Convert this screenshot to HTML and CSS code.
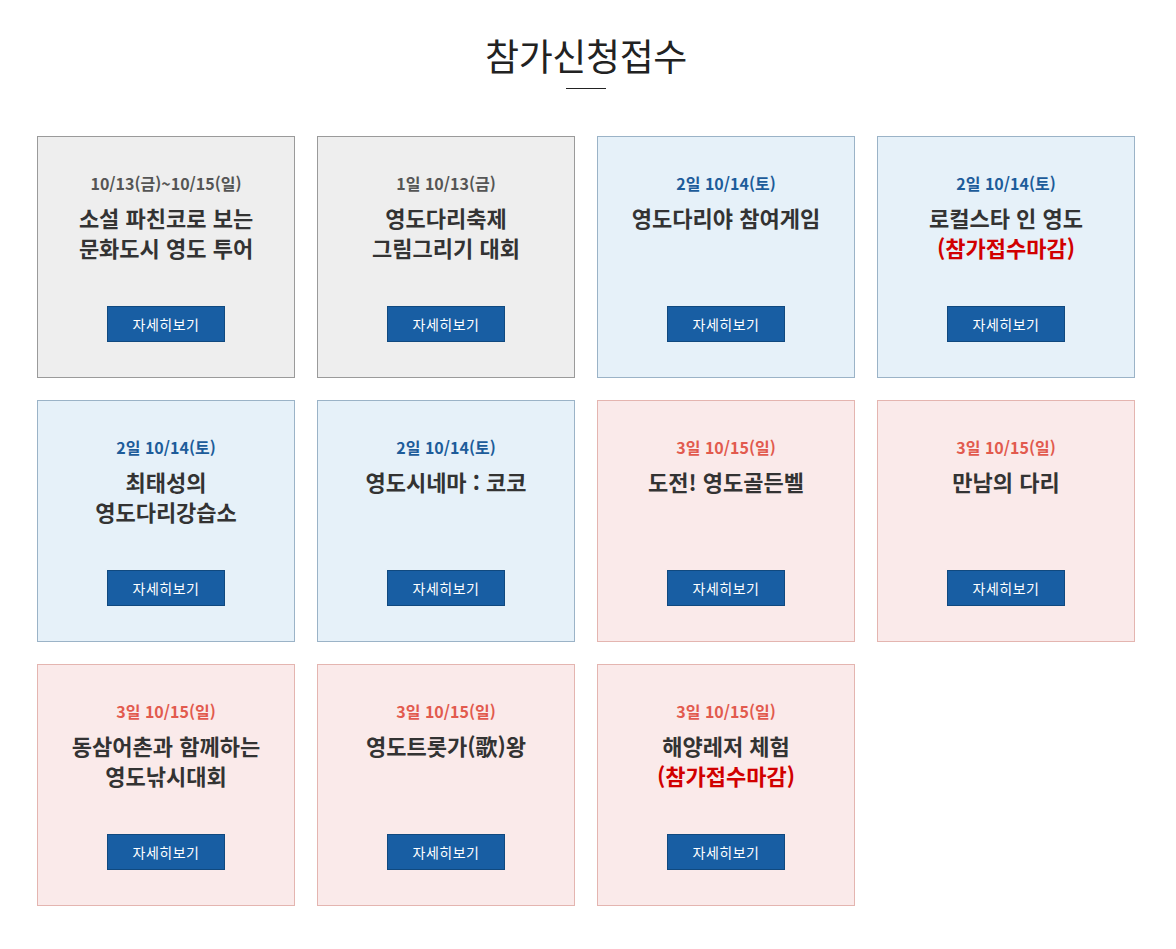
FILE: index.html
```html
<!DOCTYPE html>
<html lang="ko">
<head>
<meta charset="utf-8">
<title>참가신청접수</title>
<link rel="stylesheet" href="styles.css">
</head>
<body>
<section class="page">
  <header class="head">
    <h1 class="head-title">참가신청접수</h1>
    <span class="head-line"></span>
  </header>
  <div class="grid">
    <div class="card card-gray">
      <p class="date">10/13(금)~10/15(일)</p>
      <p class="title">소설 파친코로 보는<br>문화도시 영도 투어</p>
      <a class="btn" href="#">자세히보기</a>
    </div>
    <div class="card card-gray">
      <p class="date">1일 10/13(금)</p>
      <p class="title">영도다리축제<br>그림그리기 대회</p>
      <a class="btn" href="#">자세히보기</a>
    </div>
    <div class="card card-blue">
      <p class="date">2일 10/14(토)</p>
      <p class="title">영도다리야 참여게임</p>
      <a class="btn" href="#">자세히보기</a>
    </div>
    <div class="card card-blue">
      <p class="date">2일 10/14(토)</p>
      <p class="title">로컬스타 인 영도<br><span class="closed">(참가접수마감)</span></p>
      <a class="btn" href="#">자세히보기</a>
    </div>
    <div class="card card-blue">
      <p class="date">2일 10/14(토)</p>
      <p class="title">최태성의<br>영도다리강습소</p>
      <a class="btn" href="#">자세히보기</a>
    </div>
    <div class="card card-blue">
      <p class="date">2일 10/14(토)</p>
      <p class="title">영도시네마 : 코코</p>
      <a class="btn" href="#">자세히보기</a>
    </div>
    <div class="card card-pink">
      <p class="date">3일 10/15(일)</p>
      <p class="title">도전! 영도골든벨</p>
      <a class="btn" href="#">자세히보기</a>
    </div>
    <div class="card card-pink">
      <p class="date">3일 10/15(일)</p>
      <p class="title">만남의 다리</p>
      <a class="btn" href="#">자세히보기</a>
    </div>
    <div class="card card-pink">
      <p class="date">3일 10/15(일)</p>
      <p class="title">동삼어촌과 함께하는<br>영도낚시대회</p>
      <a class="btn" href="#">자세히보기</a>
    </div>
    <div class="card card-pink">
      <p class="date">3일 10/15(일)</p>
      <p class="title">영도트롯가(歌)왕</p>
      <a class="btn" href="#">자세히보기</a>
    </div>
    <div class="card card-pink">
      <p class="date">3일 10/15(일)</p>
      <p class="title">해양레저 체험<br><span class="closed">(참가접수마감)</span></p>
      <a class="btn" href="#">자세히보기</a>
    </div>
  </div>
</section>
</body>
</html>
```

FILE: styles.css
```css
* { box-sizing: border-box; }
html, body { margin: 0; padding: 0; background: #fff; }
body {
  font-family: "Noto Sans CJK KR", "Noto Sans", sans-serif;
  color: #333;
}
.page {
  width: 1098px;
  margin: 0 0 0 37px;
  padding-top: 34px;
  padding-bottom: 40px;
}
.head {
  display: flex;
  flex-direction: column;
  align-items: center;
}
.head-title {
  margin: 0;
  font-size: 37px;
  line-height: 42px;
  font-weight: 400;
  color: #222;
  letter-spacing: -0.4px;
}
.head-line {
  display: block;
  width: 40px;
  height: 1px;
  background: #222;
  margin-top: 12px;
}
.grid {
  margin-top: 47px;
  display: grid;
  grid-template-columns: repeat(4, 258px);
  grid-auto-rows: 242px;
  gap: 22px;
}
.card {
  display: flex;
  flex-direction: column;
  align-items: center;
  padding: 36px 6px 35px;
  border: 1px solid #999;
  text-align: center;
}
.card-gray { background: #eeeeee; border-color: #9a9a9a; }
.card-blue { background: #e6f1f9; border-color: #9bb3c7; }
.card-pink { background: #faeaea; border-color: #e4b5b0; }
.date {
  margin: 0;
  font-size: 16px;
  line-height: 20px;
  font-weight: 700;
  letter-spacing: 0;
}
.card-gray .date { color: #555; }
.card-blue .date { color: #1d5c9a; }
.card-pink .date { color: #e25a4e; }
.title {
  margin: 9px 0 0;
  font-size: 22px;
  line-height: 30px;
  font-weight: 700;
  letter-spacing: 0;
  color: #333;
}
.closed { color: #d10000; }
.btn {
  margin-top: auto;
  display: flex;
  align-items: center;
  justify-content: center;
  width: 118px;
  height: 36px;
  background: #185ea3;
  border: 1px solid #10497f;
  color: #fff;
  font-size: 14px;
  text-decoration: none;
  letter-spacing: 0.5px;
}
```
